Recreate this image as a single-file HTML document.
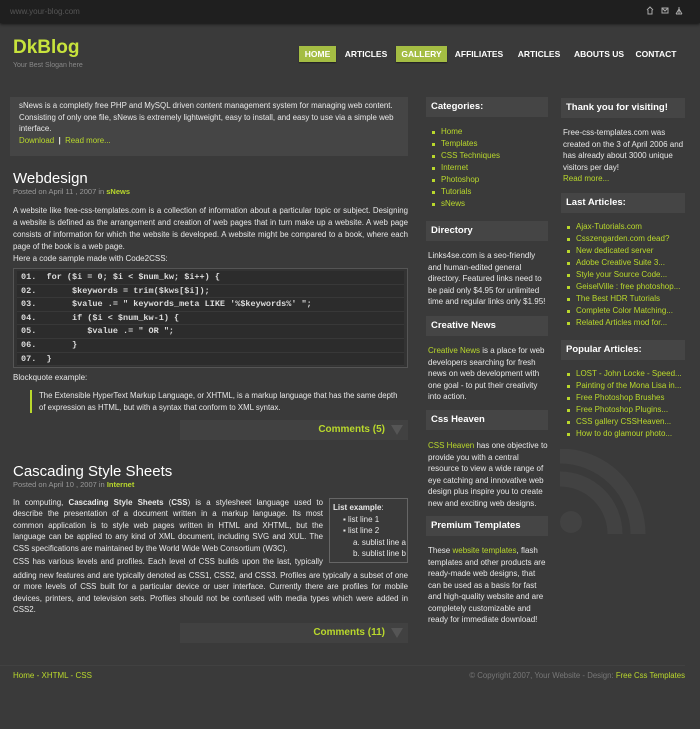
<!DOCTYPE html>
<html><head><meta charset="utf-8"><style>
*{margin:0;padding:0;box-sizing:border-box}
body{width:700px;height:729px;background:#3a3a3a;font-family:"Liberation Sans",Arial,sans-serif;font-size:8px;color:#e8e8e8;position:relative;overflow:hidden;line-height:12px}
a{color:#b9d82c;text-decoration:none}
.abs{position:absolute}
.nw{white-space:nowrap}
.top{left:0;top:0;width:700px;height:23px;background:#1f1f1f;box-shadow:0 1px 3px #111}
.top span{position:absolute;left:10px;top:6px;color:#555;font-size:8px}
.logo{left:13px;top:37px;font-size:19px;font-weight:bold;color:#c8e33c;line-height:22px}
.slogan{left:13px;top:61px;font-size:7px;color:#888;line-height:9px}
.nav{top:46px;height:16px;font-size:8.5px;font-weight:bold;color:#fff;line-height:16px;text-align:center;white-space:nowrap}
.nav.on{background:#a4bd43;box-shadow:0 1px 1px #222}
.box{background:#454545}
.hd{background:#454545;height:20px;font-weight:bold;font-size:9.5px;line-height:20px;padding-left:5px;color:#fff;white-space:nowrap}
h2{position:absolute;font-family:"Liberation Sans",sans-serif;font-weight:normal;font-size:15px;color:#fff;line-height:18px;white-space:nowrap}
.meta{font-size:7.5px;color:#999;white-space:nowrap}
.meta a{font-weight:bold}
.L{white-space:nowrap;text-align:justify;text-align-last:justify;font-size:7.9px}
.L.e{text-align-last:left}
ul.g{list-style:none}
ul.g li{padding-left:12px;position:relative;white-space:nowrap}
ul.g li:before{content:"";position:absolute;left:3px;top:5px;width:3px;height:3px;background:#b9d82c}
.code{left:13px;top:268px;width:395px;height:100px;border:1px solid #555;background:#333;padding:2px 3px;font-family:"Liberation Mono",monospace;font-size:8.5px;font-weight:bold}
.code div{height:13.6px;line-height:13.6px;background:#2c2c2c;border-bottom:1px solid #383838;white-space:pre;padding-left:4px;color:#ddd}
.cm{background:#414141;height:20px;font-weight:bold;font-size:10px;color:#b9d82c;text-align:right;padding-right:23px;line-height:20px}
.cm:after{content:"";position:absolute;right:5px;top:5px;border-left:6px solid transparent;border-right:6px solid transparent;border-top:10px solid #555}
.sp{padding-left:2px;line-height:11.5px;white-space:nowrap}
</style></head><body>
<div class="abs top"><span>www.your-blog.com</span>
<svg class="abs" style="left:646px;top:6px" width="40" height="9" fill="none" stroke="#aaa" stroke-width="1"><path d="M1 4L4 1L7 4M2 4V8H6V4"/><rect x="16" y="2" width="6" height="5"/><path d="M16 2L19 5L22 2"/><path d="M33 1V8M30 8L33 3L36 8M30 8H36"/></svg></div>
<div class="abs logo">DkBlog</div>
<div class="abs slogan">Your Best Slogan here</div>
<div class="abs nav on" style="left:299px;width:37px">HOME</div>
<div class="abs nav" style="left:342px;width:48px">ARTICLES</div>
<div class="abs nav on" style="left:396px;width:51px">GALLERY</div>
<div class="abs nav" style="left:452px;width:54px">AFFILIATES</div>
<div class="abs nav" style="left:514px;width:50px">ARTICLES</div>
<div class="abs nav" style="left:573px;width:52px">ABOUTS US</div>
<div class="abs nav" style="left:634px;width:44px">CONTACT</div>

<div class="abs box nw" style="left:10px;top:97px;width:398px;height:59px;padding:3px 9px;line-height:11.5px;font-size:7.9px">sNews is a completly free PHP and MySQL driven content management system for managing web content.<br>Consisting of only one file, sNews is extremely lightweight, easy to install, and easy to use via a simple web<br>interface.<br><a>Download</a> &nbsp;<b>|</b>&nbsp; <a>Read more...</a></div>

<h2 style="left:13px;top:170px">Webdesign</h2>
<div class="abs meta" style="left:13px;top:186px">Posted on April 11 , 2007 in <a>sNews</a></div>
<div class="abs" style="left:13px;top:205px;width:395px">
<div class="L">A website like free-css-templates.com is a collection of information about a particular topic or subject. Designing</div>
<div class="L">a website is defined as the arrangement and creation of web pages that in turn make up a website. A web page</div>
<div class="L">consists of information for which the website is developed. A website might be compared to a book, where each</div>
<div class="L e">page of the book is a web page.</div></div>
<p class="abs nw" style="left:13px;top:253px">Here a code sample made with Code2CSS:</p>
<div class="abs code"><div>01.  for ($i = 0; $i &lt; $num_kw; $i++) {</div><div>02.       $keywords = trim($kws[$i]);</div><div>03.       $value .= " keywords_meta LIKE '%$keywords%' ";</div><div>04.       if ($i &lt; $num_kw-1) {</div><div>05.          $value .= " OR ";</div><div>06.       }</div><div>07.  }</div></div>
<p class="abs nw" style="left:13px;top:372px">Blockquote example:</p>
<div class="abs nw" style="left:30px;top:390px;width:378px;border-left:2px solid #b9d82c;padding-left:7px;line-height:11.5px;font-size:7.8px">The Extensible HyperText Markup Language, or XHTML, is a markup language that has the same depth<br>of expression as HTML, but with a syntax that conform to XML syntax.</div>
<div class="abs cm" style="left:180px;top:420px;width:228px">Comments (5)</div>

<h2 style="left:13px;top:463px">Cascading Style Sheets</h2>
<div class="abs meta" style="left:13px;top:479px">Posted on April 10 , 2007 in <a>Internet</a></div>
<div class="abs nw" style="left:329px;top:498px;width:79px;height:65px;border:1px solid #666;padding:3px;line-height:11.5px"><b>List example</b>:<br>
<div style="padding-left:10px">▪ list line 1<br>▪ list line 2</div>
<div style="padding-left:20px">a. sublist line a<br>b. sublist line b</div></div>
<div class="abs" style="left:13px;top:497px;width:310px;line-height:11.4px">
<div class="L">In computing, <b>Cascading Style Sheets</b> (<b>CSS</b>) is a stylesheet language used to</div>
<div class="L">describe the presentation of a document written in a markup language. Its most</div>
<div class="L">common application is to style web pages written in HTML and XHTML, but the</div>
<div class="L">language can be applied to any kind of XML document, including SVG and XUL. The</div>
<div class="L e">CSS specifications are maintained by the World Wide Web Consortium (W3C).</div>
<div class="L" style="margin-top:2px">CSS has various levels and profiles. Each level of CSS builds upon the last, typically</div></div>
<div class="abs" style="left:13px;top:570px;width:395px;line-height:11.4px">
<div class="L">adding new features and are typically denoted as CSS1, CSS2, and CSS3. Profiles are typically a subset of one</div>
<div class="L">or more levels of CSS built for a particular device or user interface. Currently there are profiles for mobile</div>
<div class="L">devices, printers, and television sets. Profiles should not be confused with media types which were added in</div>
<div class="L e">CSS2.</div></div>
<div class="abs cm" style="left:180px;top:623px;width:228px">Comments (11)</div>

<div class="abs" style="left:0;top:665px;width:685px;border-top:1px solid #414141"></div>
<div class="abs nw" style="left:13px;top:670px"><a>Home</a> <span style="color:#b9d82c">-</span> <a>XHTML</a> <span style="color:#b9d82c">-</span> <a>CSS</a></div>
<div class="abs nw" style="right:15px;top:670px;color:#777;font-size:7.8px">© Copyright 2007, Your Website - Design: <a>Free Css Templates</a></div>

<svg class="abs" style="left:560px;top:449px" width="90" height="90"><g fill="none" stroke="#424242" stroke-width="15"><path d="M0 30A55 55 0 0 1 55 85"/><path d="M0 7A78 78 0 0 1 78 85"/></g><circle cx="11" cy="73" r="11" fill="#424242"/></svg>

<div class="abs" style="left:426px;top:97px;width:122px">
<div class="hd">Categories:</div>
<ul class="g" style="margin-top:9px;padding-left:3px"><li><a>Home</a></li><li><a>Templates</a></li><li><a>CSS Techniques</a></li><li><a>Internet</a></li><li><a>Photoshop</a></li><li><a>Tutorials</a></li><li><a>sNews</a></li></ul>
</div>
<div class="abs" style="left:426px;top:221px;width:122px">
<div class="hd">Directory</div>
<p class="sp" style="margin-top:9px">Links4se.com is a seo-friendly<br>and human-edited general<br>directory. Featured links need to<br>be paid only $4.95 for unlimited<br>time and regular links only $1.95!</p></div>
<div class="abs" style="left:426px;top:316px;width:122px">
<div class="hd">Creative News</div>
<p class="sp" style="margin-top:9px"><a>Creative News</a> is a place for web<br>developers searching for fresh<br>news on web development with<br>one goal - to put their creativity<br>into action.</p></div>
<div class="abs" style="left:426px;top:410px;width:122px">
<div class="hd">Css Heaven</div>
<p class="sp" style="margin-top:10px"><a>CSS Heaven</a> has one objective to<br>provide you with a central<br>resource to view a wide range of<br>eye catching and innovative web<br>design plus inspire you to create<br>new and exciting web designs.</p></div>
<div class="abs" style="left:426px;top:516px;width:122px">
<div class="hd">Premium Templates</div>
<p class="sp" style="margin-top:9px">These <a>website templates</a>, flash<br>templates and other products are<br>ready-made web designs, that<br>can be used as a basis for fast<br>and high-quality website and are<br>completely customizable and<br>ready for immediate download!</p></div>

<div class="abs" style="left:561px;top:98px;width:124px">
<div class="hd">Thank you for visiting!</div>
<p class="sp" style="margin-top:9px">Free-css-templates.com was<br>created on the 3 of April 2006 and<br>has already about 3000 unique<br>visitors per day!<br><a>Read more...</a></p></div>
<div class="abs" style="left:561px;top:193px;width:124px">
<div class="hd">Last Articles:</div>
<ul class="g" style="margin-top:8px;padding-left:3px"><li><a>Ajax-Tutorials.com</a></li><li><a>Csszengarden.com dead?</a></li><li><a>New dedicated server</a></li><li><a>Adobe Creative Suite 3...</a></li><li><a>Style your Source Code...</a></li><li><a>GeiselVille : free photoshop...</a></li><li><a>The Best HDR Tutorials</a></li><li><a>Complete Color Matching...</a></li><li><a>Related Articles mod for...</a></li></ul></div>
<div class="abs" style="left:561px;top:340px;width:124px">
<div class="hd">Popular Articles:</div>
<ul class="g" style="margin-top:8px;padding-left:3px"><li><a>LOST - John Locke - Speed...</a></li><li><a>Painting of the Mona Lisa in...</a></li><li><a>Free Photoshop Brushes</a></li><li><a>Free Photoshop Plugins...</a></li><li><a>CSS gallery CSSHeaven...</a></li><li><a>How to do glamour photo...</a></li></ul></div>
</body></html>
